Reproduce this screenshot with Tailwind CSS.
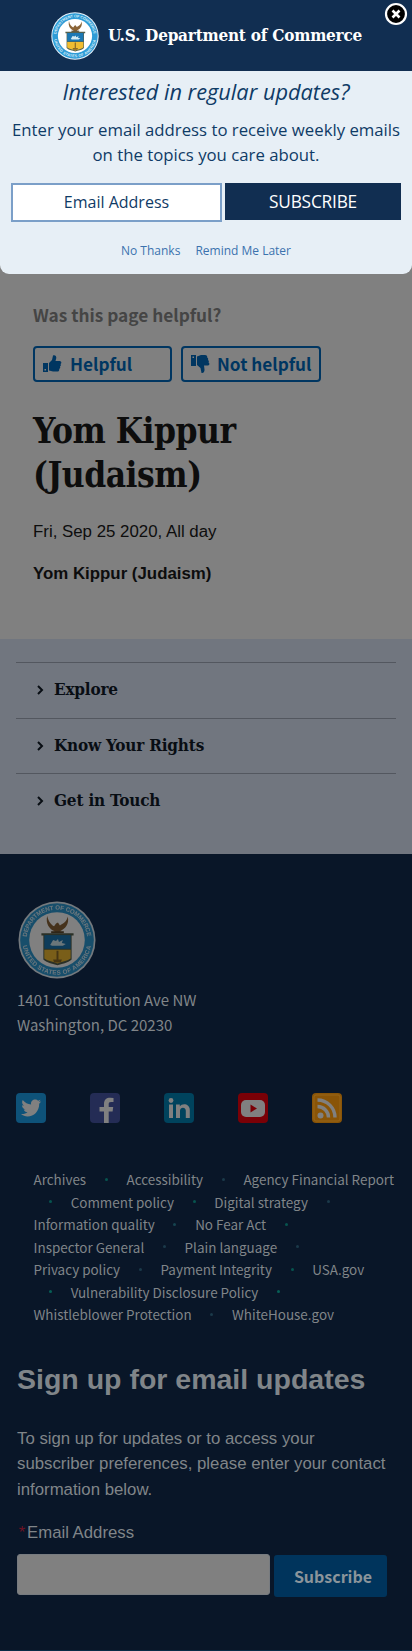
<!DOCTYPE html>
<html lang="en">
<head>
<meta charset="utf-8">
<meta name="viewport" content="width=device-width">
<title>Yom Kippur (Judaism) | U.S. Department of Commerce</title>
<script src="https://cdn.jsdelivr.net/npm/@tailwindcss/browser@4"></script>
</head>
<body class="relative w-[412px] h-[1651px] overflow-hidden bg-[#808080] font-['Liberation_Sans',sans-serif] text-[#0d0d0d]">
<svg class="hidden">
  <symbol id="seal" viewBox="0 0 80 80">
    <circle cx="40" cy="40" r="39.5" fill="#e8f2fa"/>
    <circle cx="40" cy="40" r="37.8" fill="#2e9bd6"/>
    <circle cx="40" cy="40" r="28.5" fill="#fff"/>
    <path id="ringTop" d="M8.900 40a31.100 31.100 0 0 1 62.200 0" fill="none"/>
    <path id="ringBottom" d="M4.500 40a35.500 35.500 0 0 0 71 0" fill="none"/>
    <g fill="#d7edf8" font-family="Liberation Sans" font-weight="700" font-size="6.3">
      <text><textPath href="#ringTop" startOffset="3" textLength="91">DEPARTMENT OF COMMERCE</textPath></text>
      <text><textPath href="#ringBottom" startOffset="6" textLength="99">UNITED STATES OF AMERICA</textPath></text>
    </g>
    <path d="M30 15c1 6 4 9 7 11l2-3 2-1 2 3c4-2 7-4 8-9 2 8-3 13-8 15l3 2H34l4-2c-6-2-10-8-8-16z" fill="#8a6437"/>
    <path d="M34 31h13v2H34z" fill="#5c4a30"/>
    <path d="M24 33h33v2.500h-2V60c-4 4-10 4-14.500 6C36 64 30 64 26 60V35.500h-2z" fill="#54604e"/>
    <path d="M27 35h27v14H27z" fill="#1c78b4"/>
    <path d="M27 50h27v9c-4 3-9 3-13.500 5C36 62 31 62 27 59z" fill="#f1bd32"/>
    <path d="M33 45l3-5 3 1 2-2 1 3 4-2-1 3 4 1-3 2H35z" fill="#d4ebf4"/>
    <path d="M39.500 51h2v11h-2z" fill="#8c6a26"/><path d="M36 60h9l-1 3h-7z" fill="#8c6a26"/>
  </symbol>
</svg>

<header class="flex h-[71px] items-start bg-[#112e51] pt-3 pl-[51px]">
  <svg class="size-12"><use href="#seal"/></svg>
  <h1 class="ml-[9px] mt-[11px] whitespace-nowrap font-['DejaVu_Serif_Condensed','DejaVu_Serif',serif] text-[17px] leading-6 font-bold text-white tracking-[-0.220px]">U.S. Department of Commerce</h1>
</header>
<svg class="absolute left-[384px] top-[2px] size-6" viewBox="0 0 24 24">
  <circle cx="12" cy="12" r="10" fill="#000" stroke="#fff" stroke-width="2.200"/>
  <path d="M8.500 8.500l7 7m0-7l-7 7" stroke="#fff" stroke-width="2.600"/>
</svg>

<section class="h-[203px] rounded-b-[9px] bg-[#e7eff6] pt-[5px] font-['Open_Sans','Noto_Sans',sans-serif] text-[#0f3b66]">
  <h2 class="text-center text-[21.750px] leading-8 italic whitespace-nowrap">Interested in regular updates?</h2>
  <p class="mt-[9px] text-center text-[16.750px] leading-[25px] whitespace-nowrap">Enter your email address to receive weekly emails<br>on the topics you care about.</p>
  <div class="mt-[16px] flex gap-[3px] pl-[11px]">
    <div class="flex h-[39px] w-[211px] items-center justify-center border-2 border-[#7b9fc8] bg-white pb-px text-base">Email Address</div>
    <div class="flex h-[37px] w-[176px] items-center justify-center bg-[#112e51] text-[17.300px] text-white tracking-[-0.2px]">SUBSCRIBE</div>
  </div>
  <div class="mt-[19px] flex justify-center gap-[15px] text-xs leading-5 text-[#3b72ae]"><a>No Thanks</a><a>Remind Me Later</a></div>
</section>

<main class="h-[365px] pl-[33px] pt-[29px]">
  <p class="font-['Noto_Sans_CJK_SC',sans-serif] text-[17.250px] leading-6 font-bold text-[#454545]">Was this page helpful?</p>
  <div class="mt-[19px] flex gap-[9px] font-['Noto_Sans_CJK_SC',sans-serif] text-[17.200px] font-bold text-[#003661]">
    <div class="flex h-9 w-[139px] items-center rounded border-2 border-[#003661] pl-[7px]">
      <svg class="size-5" viewBox="0 0 20 20" fill="#003661"><path d="M1 9h5v9H1zM7 9l3-3 1-4.500c2-.8 3.500.5 3.300 2.500L13.500 7H18c2 .8 1.500 2.500.5 3 .8 1 .3 2-.5 2.500.6 1 0 2-.8 2.400.3 1.600-.5 2.600-2.200 2.600h-4L7 16.500z"/><path d="M2.500 15h1.500v1.500H2.500z" fill="#808080"/></svg>
      <span class="ml-[8px]">Helpful</span>
    </div>
    <div class="flex h-9 w-[140px] items-center rounded border-2 border-[#003661] pl-[7px]">
      <svg class="size-5" viewBox="0 0 20 20" fill="#003661"><path d="M1 1h5v11H1zM7 2.500L11 1h4c1.700 0 2.500 1.200 2.200 2.600.9.400 1.300 1.400.8 2.400.8.500 1.300 1.500.5 2.500 1 .5 1.500 2.500-.5 3h-4l.5 4c.2 2-1 4-3 3.500L10.500 14 7 11z"/><path d="M2.500 2.500H4V4H2.500z" fill="#808080"/></svg>
      <span class="ml-[7px] whitespace-nowrap">Not helpful</span>
    </div>
  </div>
  <h1 class="mt-[27px] font-['DejaVu_Serif_Condensed','DejaVu_Serif',serif] text-[35px] leading-[44px] font-bold tracking-[-0.5px]">Yom Kippur<br>(Judaism)</h1>
  <p class="mt-[23px] text-[16.850px] leading-6">Fri, Sep 25 2020, All day</p>
  <p class="mt-[18px] text-[16.850px] leading-6 font-bold">Yom Kippur (Judaism)</p>
</main>

<nav class="h-[215px] bg-[#71767f] px-4 pt-[23px] font-['DejaVu_Serif_Condensed','DejaVu_Serif',serif] text-[17px] font-bold text-[#080d13] tracking-[-0.2px]">
  <div class="flex h-[56px] items-center border-t border-[#53575f] pb-px pl-[21px]"><svg class="mr-[10px] h-3 w-[7px]" viewBox="0 0 7 12"><path d="M1 2l4 4-4 4" fill="none" stroke="#080d13" stroke-width="2"/></svg>Explore</div>
  <div class="flex h-[55px] items-center border-t border-[#53575f] pl-[21px]"><svg class="mr-[10px] h-3 w-[7px]" viewBox="0 0 7 12"><path d="M1 2l4 4-4 4" fill="none" stroke="#080d13" stroke-width="2"/></svg>Know Your Rights</div>
  <div class="flex h-[56px] items-center border-t border-[#53575f] pb-px pl-[21px]"><svg class="mr-[10px] h-3 w-[7px]" viewBox="0 0 7 12"><path d="M1 2l4 4-4 4" fill="none" stroke="#080d13" stroke-width="2"/></svg>Get in Touch</div>
</nav>

<footer class="h-[797px] border-b border-[#082b45] bg-[#091628] pt-[47px] text-[#808589]">
  <svg class="ml-[18px] size-[78px] brightness-50"><use href="#seal"/></svg>
  <address class="ml-[17px] mt-[8px] font-['Noto_Sans_CJK_SC',sans-serif] text-[15px] leading-[25px] not-italic">1401 Constitution Ave NW<br>Washington, DC 20230</address>
  <div class="mt-[56px] flex gap-11 pl-4">
    <svg class="size-[30px]" viewBox="0 0 30 30"><rect width="30" height="30" rx="4" fill="#0e5279"/><path d="M5 21c3 .2 5-.6 6.500-1.800-2 0-3.300-1.200-3.800-2.700h1.700C7 15.800 6 14 6 12.200l1.800.5C6 11 5.600 9 6.700 7c2.300 2.800 5 4.300 8.400 4.500C14.500 8 17 6.500 19 6.500c1.400 0 2.300.5 3.100 1.300l2.500-1-1.600 2.300 2.200-.5-2 2.100C23.300 18 18 23.500 11.500 23.500 9 23.500 7 22.500 5 21z" fill="#808080"/></svg>
    <svg class="size-[30px]" viewBox="0 0 30 30"><rect width="30" height="30" rx="4" fill="#242c55"/><path d="M14 30V18.500H9.500V14H14v-3c0-4.500 2.600-6.300 6-6.300l3.500.2V9h-2.400c-2 0-2.400.9-2.400 2.300V14h4.500l-.6 4.500h-3.900V30z" fill="#808080"/></svg>
    <svg class="size-[30px]" viewBox="0 0 30 30"><rect width="30" height="30" rx="4" fill="#00435d"/><g fill="#808080"><circle cx="7" cy="7.500" r="2.400"/><path d="M5 11.500h4V25H5zM12 11.500h3.800v2c2.400-3.800 10-2.800 10 3.500v8h-4v-7.200c0-4-5.800-3.800-5.800 0V25h-4z"/></g></svg>
    <svg class="size-[30px]" viewBox="0 0 30 30"><rect width="30" height="30" rx="4" fill="#7a0006"/><rect x="3" y="7" width="24" height="17" rx="5" fill="#808080"/><path d="M12.500 11.500l6.500 4-6.500 4z" fill="#7a0006"/></svg>
    <svg class="size-[30px]" viewBox="0 0 30 30"><rect width="30" height="30" rx="4" fill="#895407"/><rect x="2" y="2" width="26" height="26" rx="2" fill="none" stroke="#976519"/><circle cx="8.500" cy="22.500" r="3" fill="#808080"/><path d="M5.500 13.500a11 11 0 0 1 11 11M5.500 7a17.500 17.500 0 0 1 17.500 17.500" fill="none" stroke="#808080" stroke-width="3.400"/></svg>
  </div>
  <div class="mt-[45px] flex flex-col pl-[33.500px] font-['Noto_Sans_CJK_SC',sans-serif] text-[13.450px] leading-[22.500px] whitespace-nowrap">
    <div class="flex items-center gap-[18.700px]"><a>Archives</a><i class="size-[3px] rounded-full bg-[#07544f]"></i><a>Accessibility</a><i class="size-[3px] rounded-full bg-[#1b3a4a]"></i><a>Agency Financial Report</a></div>
    <div class="flex items-center gap-[18.700px] pl-[15.500px]"><i class="size-[3px] rounded-full bg-[#07544f]"></i><a>Comment policy</a><i class="size-[3px] rounded-full bg-[#07544f]"></i><a>Digital strategy</a><i class="size-[3px] rounded-full bg-[#1b3a4a]"></i></div>
    <div class="flex items-center gap-[18.700px]"><a>Information quality</a><i class="size-[3px] rounded-full bg-[#164450]"></i><a>No Fear Act</a><i class="size-[3px] rounded-full bg-[#07544f]"></i></div>
    <div class="flex items-center gap-[18.700px]"><a>Inspector General</a><i class="size-[3px] rounded-full bg-[#1b3a4a]"></i><a>Plain language</a><i class="size-[3px] rounded-full bg-[#1b3a4a]"></i></div>
    <div class="flex items-center gap-[18.700px]"><a>Privacy policy</a><i class="size-[3px] rounded-full bg-[#1b3a4a]"></i><a>Payment Integrity</a><i class="size-[3px] rounded-full bg-[#07544f]"></i><a>USA.gov</a></div>
    <div class="flex items-center gap-[18.700px] pl-[15.500px]"><i class="size-[3px] rounded-full bg-[#075f56]"></i><a>Vulnerability Disclosure Policy</a><i class="size-[3px] rounded-full bg-[#075f56]"></i></div>
    <div class="flex items-center gap-[18.700px]"><a>Whistleblower Protection</a><i class="size-[3px] rounded-full bg-[#1b3a4a]"></i><a>WhiteHouse.gov</a></div>
  </div>
  <h2 class="ml-[17px] mt-[33px] text-[28.500px] leading-10 font-bold whitespace-nowrap">Sign up for email updates</h2>
  <p class="ml-[17px] mt-[27px] text-[16.800px] leading-[25.600px] whitespace-nowrap">To sign up for updates or to access your<br>subscriber preferences, please enter your contact<br>information below.</p>
  <p class="ml-[17px] mt-[19px] text-[16.750px] leading-6 whitespace-nowrap"><span class="inline-block w-[10px] text-center text-[#6d1224]">*</span>Email Address</p>
  <div class="mt-[9px] flex gap-[4px] pl-[17px]">
    <div class="h-[41px] w-[253px] rounded-[3px] border border-[#777b80] bg-[#808080]"></div>
    <div class="mt-px flex h-[42px] w-[113px] items-center justify-center rounded-[3px] bg-[#00345c] pl-[5px] font-['Noto_Sans_CJK_SC',sans-serif] text-base font-bold text-[#8b949b]">Subscribe</div>
  </div>
</footer>
</body>
</html>
